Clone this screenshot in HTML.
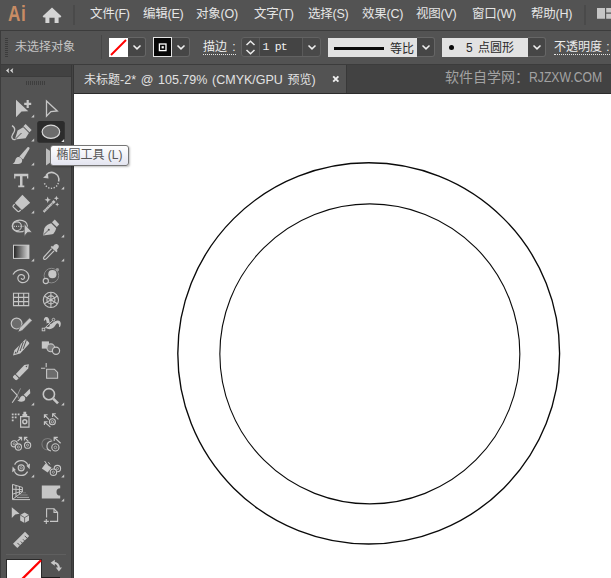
<!DOCTYPE html>
<html lang="zh-CN">
<head>
<meta charset="utf-8">
<title>Ai</title>
<style>
html,body{margin:0;padding:0;}
body{width:611px;height:578px;overflow:hidden;background:#535353;position:relative;font-family:"Liberation Sans","Noto Sans CJK SC",sans-serif;font-size:12px;color:#dcdcdc;}
.abs{position:absolute;}
#menubar{left:0;top:0;width:611px;height:30px;background:#535353;}
#menubar .mi{position:absolute;top:0;height:29px;line-height:28px;font-size:12.5px;letter-spacing:-0.25px;color:#e6e6e6;white-space:nowrap;}
#ctrl{left:0;top:30px;width:611px;height:34px;background:#535353;box-shadow:inset 0 1px 0 #3c3c3c;}
#dark{left:0;top:64px;width:611px;height:514px;background:#424242;}
#toolhead{left:1px;top:65px;width:70px;height:11px;background:#424242;}
.ln{position:absolute;}
#toolbody{left:1px;top:77px;width:70px;height:501px;background:#535353;}
#tab{left:74px;top:65px;width:272px;height:28px;background:#535353;}
#canvas{left:74px;top:94px;width:537px;height:484px;background:#fff;}

#ctrl .t{position:absolute;white-space:nowrap;font-size:12px;color:#d2d2d2;line-height:16px;}
.dd{position:absolute;top:7px;height:20px;width:18px;background:#464646;border:1px solid #666;border-left:none;border-radius:0 3px 3px 0;box-sizing:border-box;}
.dd svg{position:absolute;left:3.5px;top:6px;}
.lbox{position:absolute;top:8px;height:19px;background:#e2e2e2;color:#2a2a2a;}
.ul{border-bottom:1px dotted #e6e6e6;padding-bottom:0;}
</style>
</head>
<body>
<div id="menubar" class="abs">
  <div class="abs" id="ailogo" style="left:8px;top:0;height:30px;line-height:27.8px;font-size:22px;font-weight:bold;color:#c88c64;letter-spacing:0.8px;transform:scaleX(0.78);transform-origin:0 0;">Ai</div>
  <svg class="abs" style="left:42px;top:6px" width="22" height="18" viewBox="42 6 22 18"><path d="M52 7.4 L42.6 16.2 L43.6 17.4 H45.4 V23 H49.4 V17.8 H54.6 V23 H58.6 V17.4 H60.4 L61.4 16.2 Z" fill="#d4d4d4"/></svg>
  <div class="abs" style="left:73px;top:5px;width:2px;height:20px;background:#4a4a4a;"></div>
  <div class="mi" style="left:90px">文件(F)</div>
  <div class="mi" style="left:143px">编辑(E)</div>
  <div class="mi" style="left:196px">对象(O)</div>
  <div class="mi" style="left:254px">文字(T)</div>
  <div class="mi" style="left:308px">选择(S)</div>
  <div class="mi" style="left:362px">效果(C)</div>
  <div class="mi" style="left:416px">视图(V)</div>
  <div class="mi" style="left:472px">窗口(W)</div>
  <div class="mi" style="left:531px">帮助(H)</div>
  <div class="abs" style="left:584px;top:5px;width:2px;height:20px;background:#4a4a4a;"></div>
  <svg class="abs" style="left:596px;top:7px" width="15" height="13" viewBox="596 7 15 13"><path d="M597 8 H605 V18.8 H597 Z M606.2 8 H612 V12.6 H606.2 Z M606.2 13.8 H612 V18.8 H606.2 Z" fill="#c6c6c6"/></svg>
</div>
<div id="ctrl" class="abs">
  <svg class="abs" style="left:4px;top:7px" width="5" height="22" viewBox="0 0 5 22"><g fill="#3c3c3c"><rect x="1" y="1" width="3" height="1"/><rect x="1" y="3" width="3" height="1"/><rect x="1" y="5" width="3" height="1"/><rect x="1" y="7" width="3" height="1"/><rect x="1" y="9" width="3" height="1"/><rect x="1" y="11" width="3" height="1"/><rect x="1" y="13" width="3" height="1"/><rect x="1" y="15" width="3" height="1"/><rect x="1" y="17" width="3" height="1"/><rect x="1" y="19" width="3" height="1"/></g></svg>
  <div class="t" style="left:15px;top:9px;color:#c4c4c4;">未选择对象</div>
  <div class="abs" style="left:101px;top:5px;width:1px;height:24px;background:#474747;"></div>
  <svg class="abs" style="left:109px;top:8px" width="19" height="19" viewBox="0 0 19 19"><rect width="19" height="19" fill="#fff"/><path d="M2 17 L17 2" stroke="#f00" stroke-width="2"/></svg>
  <div class="dd" style="left:128px"><svg width="10" height="7" viewBox="0 0 10 7"><path d="M1.5 1.5 L5 4.9 L8.5 1.5" fill="none" stroke="#f0f0f0" stroke-width="1.5"/></svg></div>
  <svg class="abs" style="left:153px;top:7px" width="19" height="20" viewBox="0 0 19 20"><rect width="19" height="20" fill="#e4e4e4"/><rect x="1" y="1" width="17" height="18" fill="#060606"/><rect x="6.4" y="7" width="6.6" height="6.6" fill="none" stroke="#fff" stroke-width="1.3"/><rect x="8.6" y="9.2" width="2.2" height="2.2" fill="#fff"/></svg>
  <div class="dd" style="left:172px"><svg width="10" height="7" viewBox="0 0 10 7"><path d="M1.5 1.5 L5 4.9 L8.5 1.5" fill="none" stroke="#f0f0f0" stroke-width="1.5"/></svg></div>
  <div class="t" style="left:203px;top:9px;"><span class="ul" style="color:#ececec">描边<span style="letter-spacing:2px">&nbsp;</span>:</span></div>
  <div class="abs" style="left:241px;top:7px;width:80px;height:20px;border:1px solid #626262;border-radius:3px;box-sizing:border-box;background:#494949;"></div>
  <svg class="abs" style="left:245px;top:10px" width="11" height="15" viewBox="0 0 11 15"><path d="M1.5 5 L5.5 1.2 L9.5 5 M1.5 10 L5.5 13.8 L9.5 10" fill="none" stroke="#ececec" stroke-width="1.5"/></svg>
  <div class="abs" style="left:259px;top:8px;width:44px;height:18px;background:#444;border-left:1px solid #5a5a5a;border-right:1px solid #5a5a5a;box-sizing:border-box;"></div>
  <div class="t" style="left:262.5px;top:9px;font-family:'Liberation Mono','Noto Sans CJK SC',monospace;font-size:11.5px;letter-spacing:-0.8px;color:#f0f0f0;">1 pt</div>
  <div class="abs" style="left:307px;top:14px;line-height:0;"><svg width="10" height="7" viewBox="0 0 10 7"><path d="M1.5 1.5 L5 4.9 L8.5 1.5" fill="none" stroke="#f0f0f0" stroke-width="1.5"/></svg></div>
  <div class="lbox" style="left:328px;width:89px;"><div class="abs" style="left:6px;top:8.5px;width:50px;height:3px;background:#0a0a0a;"></div><div class="abs" style="left:62px;top:3px;font-size:12px;line-height:16px;white-space:nowrap;">等比</div></div>
  <div class="dd" style="left:417px"><svg width="10" height="7" viewBox="0 0 10 7"><path d="M1.5 1.5 L5 4.9 L8.5 1.5" fill="none" stroke="#f0f0f0" stroke-width="1.5"/></svg></div>
  <div class="lbox" style="left:442px;width:86px;"><div class="abs" style="left:7px;top:7px;width:5px;height:5px;border-radius:50%;background:#0a0a0a;"></div><div class="abs" style="left:24px;top:2px;font-size:12px;line-height:16px;white-space:pre;word-spacing:2px;">5 点圆形</div></div>
  <div class="dd" style="left:528px"><svg width="10" height="7" viewBox="0 0 10 7"><path d="M1.5 1.5 L5 4.9 L8.5 1.5" fill="none" stroke="#f0f0f0" stroke-width="1.5"/></svg></div>
  <div class="t" style="left:554px;top:9px;"><span class="ul" style="color:#ececec">不透明度<span style="letter-spacing:1px">&nbsp;</span>:</span></div>
</div>
<div id="dark" class="abs"></div>
<div id="toolhead" class="abs"></div>
<div id="toolbody" class="abs"></div>
<div id="tab" class="abs"><div class="abs" style="left:10px;top:7px;font-size:12.5px;line-height:16px;color:#e2e2e2;white-space:nowrap;word-spacing:1.2px;" id="tabtxt"><span style="font-size:12px">未标题</span>-2* @ 105.79% (CMYK/GPU <span style="font-size:12px">预览</span>)</div>
<svg class="abs" style="left:257px;top:9px" width="10" height="10" viewBox="0 0 10 10"><path d="M2.2 2.4 L7.4 7.6 M7.4 2.4 L2.2 7.6" stroke="#f0f0f0" stroke-width="1.9"/></svg></div>
<div class="abs" id="wm" style="left:445px;top:67px;font-size:14px;line-height:20px;color:#a2a2a2;white-space:nowrap;">软件自学网：<span style="display:inline-block;transform:scaleX(0.87);transform-origin:0 50%;">RJZXW.COM</span></div>
<div id="canvas" class="abs"></div>
<div class="ln" style="left:0;top:64px;width:611px;height:1px;background:#3c3c3c;"></div>
<div class="ln" style="left:0;top:30px;width:1px;height:548px;background:#3c3c3c;"></div>
<div class="ln" style="left:1px;top:76px;width:70px;height:1px;background:#3c3c3c;"></div>
<div class="ln" style="left:71px;top:65px;width:1px;height:513px;background:#383838;"></div>
<div class="ln" style="left:72px;top:65px;width:1px;height:513px;background:#444;"></div>
<div class="ln" style="left:73px;top:65px;width:1px;height:513px;background:#363636;"></div>
<div class="ln" style="left:346px;top:65px;width:1px;height:28px;background:#383838;"></div>
<div class="ln" style="left:74px;top:93px;width:537px;height:1px;background:#2c2c2c;"></div>

<svg class="abs" style="left:74px;top:93px" width="537" height="485" viewBox="74 93 537 485">
  <ellipse cx="368.7" cy="353.4" rx="190.9" ry="190.6" fill="none" stroke="#0a0a0a" stroke-width="1.35"/>
  <circle cx="369.85" cy="353.9" r="150" fill="none" stroke="#0a0a0a" stroke-width="1.1"/>
</svg>
<svg class="abs" id="tools" style="left:0;top:64px" width="74" height="514" viewBox="0 64 74 514">
<defs>
<linearGradient id="gr" x1="0" x2="1" y1="0" y2="0"><stop offset="0" stop-color="#222"/><stop offset="1" stop-color="#d8d8d8"/></linearGradient>
</defs>
<g fill="#c6c6c6" stroke="none">
<!-- header chevrons + gripper -->
<path d="M9.3 68 L6 70.6 L9.3 73.2 L8.5 70.6 Z M13.3 68 L10 70.6 L13.3 73.2 L12.5 70.6 Z" fill="#dadada"/>
<g fill="#3e3e3e"><rect x="26" y="81" width="1" height="4"/><rect x="28" y="81" width="1" height="4"/><rect x="30" y="81" width="1" height="4"/><rect x="32" y="81" width="1" height="4"/><rect x="34" y="81" width="1" height="4"/><rect x="36" y="81" width="1" height="4"/><rect x="38" y="81" width="1" height="4"/><rect x="40" y="81" width="1" height="4"/><rect x="42" y="81" width="1" height="4"/><rect x="44" y="81" width="1" height="4"/></g>
<!-- corner triangles -->
<g id="tri">
<path d="M34.2 114.4 V117.4 H31.2 Z"/><path d="M34.2 138.4 V141.4 H31.2 Z"/><path d="M34.2 162.4 V165.4 H31.2 Z"/><path d="M34.2 186.4 V189.4 H31.2 Z"/><path d="M34.2 210.4 V213.4 H31.2 Z"/><path d="M34.2 258.4 V261.4 H31.2 Z"/><path d="M34.2 402.4 V405.4 H31.2 Z"/><path d="M34.2 474.4 V477.4 H31.2 Z"/>
<path d="M64.2 186.4 V189.4 H61.2 Z"/><path d="M64.2 234.4 V237.4 H61.2 Z"/><path d="M64.2 258.4 V261.4 H61.2 Z"/><path d="M64.2 402.4 V405.4 H61.2 Z"/><path d="M64.2 474.4 V477.4 H61.2 Z"/><path d="M64.2 498.4 V501.4 H61.2 Z"/>
</g>
<!-- R1 L: group selection -->
<path d="M16 99.7 L28.3 111.2 L21.5 111.6 L16 117.3 Z"/>
<path d="M24.2 102.8 H31.2 V105 H24.2 Z M26.6 100 H28.8 V107.9 H26.6 Z"/>
<!-- R1 R: direct selection -->
<path d="M46.5 100.9 L57.3 110.9 L50.9 111.6 L46.5 116.2 Z" fill="none" stroke="#c6c6c6" stroke-width="1.3"/>
<!-- R2 L: curvature -->
<path d="M12 125.6 C16.5 128 14.5 132 12.6 134.5 C10.8 137.5 12.5 140.2 15.5 139.4" fill="none" stroke="#c6c6c6" stroke-width="1.3"/>
<path d="M23.2 127.2 L28.9 132.9 L25.6 138.3 L14.9 139.6 L17.6 130.6 Z"/>
<path d="M25.6 124 L31.6 130 L29.5 132.2 L23.4 126.2 Z"/>
<path d="M15.5 139 L21.5 133" stroke="#535353" stroke-width="1" fill="none"/>
<!-- R2 R: ellipse selected -->
<rect x="37.2" y="121" width="27.6" height="21.8" rx="2.5" fill="#2c2c2c"/>
<ellipse cx="50.9" cy="131.8" rx="8.8" ry="6.6" fill="#6c6c6c" stroke="#dadada" stroke-width="1.2"/>
<path d="M64.2 139 V142 H61.2 Z" fill="#e0e0e0"/>
<!-- R3 L: paintbrush -->
<path d="M27.6 147.2 C28.8 146.6 30 147.8 29.4 149 L23 159.4 L19.4 156.4 Z"/>
<path d="M18.8 157 C21.4 157.6 23 160 21.8 162.2 C20 164.6 16 164.2 12.6 163.8 C15.2 162.6 15 160.4 15.8 158.8 C16.5 157.4 17.7 156.8 18.8 157 Z"/>
<!-- R3 R: hidden tool -->
<path d="M46 148.2 L51 151.5 V162 L46 165.4 Z" fill="#bcbcbc"/>
<!-- R4 L: T -->
<path d="M14.1 173.8 H28.3 V178.6 H27 V176.2 H22.5 V185.4 H24.3 V187.2 H18.2 V185.4 H20 V176.2 H15.4 V178.6 H14.1 Z"/>
<!-- R4 R: rotate -->
<path d="M46.2 175 A7.2 7.2 0 0 1 58.6 181.5" fill="none" stroke="#c6c6c6" stroke-width="1.5"/>
<path d="M43 177.8 L47.9 173.4 L48.5 178.6 Z"/>
<path d="M58.3 183 A7.2 7.2 0 0 1 44.2 182" fill="none" stroke="#c6c6c6" stroke-width="1.4" stroke-dasharray="1.3 1.5"/>
<!-- R5 L: eraser -->
<path d="M22.4 194.8 L30.2 202.7 L21.9 209.9 L14.8 203 Z"/>
<path d="M14.6 204.2 L13.3 205.6 C12.9 206.1 12.9 206.7 13.3 207.1 L17.6 211.3 C18.1 211.7 18.8 211.7 19.3 211.3 L20.8 210" fill="none" stroke="#c6c6c6" stroke-width="1.2"/>
<!-- R5 R: magic wand -->
<path d="M43.6 211.9 L52.3 203.2" stroke="#c6c6c6" stroke-width="2.3" fill="none" stroke-dasharray="1.6 0.25"/>
<path d="M52.6 202.9 L54.6 200.9" stroke="#c6c6c6" stroke-width="2.8" fill="none"/>
<path d="M47.7 196.6 L48.6 198.9 L50.9 199.8 L48.6 200.7 L47.7 203 L46.8 200.7 L44.5 199.8 L46.8 198.9 Z"/>
<path d="M56.4 195.8 L57.1 197.6 L58.9 198.3 L57.1 199 L56.4 200.8 L55.7 199 L53.9 198.3 L55.7 197.6 Z"/>
<path d="M57.2 202.4 L57.8 203.8 L59.2 204.4 L57.8 205 L57.2 206.4 L56.6 205 L55.2 204.4 L56.6 203.8 Z"/>
<!-- R6 L: shape builder -->
<circle cx="17" cy="226.3" r="4.4" fill="none" stroke="#c6c6c6" stroke-width="1.1"/>
<ellipse cx="19.8" cy="226" rx="7.6" ry="5.9" fill="none" stroke="#c6c6c6" stroke-width="1.2"/>
<path d="M13.8 226.4 H24" stroke="#c6c6c6" stroke-width="1.2" stroke-dasharray="1 1.2" fill="none"/>
<path d="M24.2 223.6 L32.2 232.2 L27.6 232.4 L24.2 236.4 Z" stroke="#535353" stroke-width="0.8"/>
<!-- R6 R: pen -->
<path d="M51.2 223.2 L56.2 228.2 C55.6 230.6 54.4 233 52.4 234.2 L43 235.4 L44.4 228.2 C45.6 225.6 48.4 223.8 51.2 223.2 Z"/>
<path d="M54.8 219.4 L59.2 224.2 L56.8 227 L52 222.2 Z"/>
<path d="M43.4 235 L48.4 230.2" stroke="#535353" stroke-width="0.9" fill="none"/>
<circle cx="48.8" cy="229.8" r="1" fill="#535353"/>
<!-- R7 L: gradient -->
<rect x="13.5" y="245.2" width="15.4" height="13.2" fill="url(#gr)" stroke="#cdcdcd" stroke-width="1"/>
<!-- R7 R: eyedropper -->
<path d="M51.6 248.6 L44 257 C43.2 258 43.4 259.2 44.4 259.4 C45.2 259.6 45.8 259.2 46.4 258.6 L54 250.8" fill="none" stroke="#c6c6c6" stroke-width="1.2"/>
<path d="M50.6 247 L52 245.8 L53 246.8 C53.6 245 55.4 243.6 57.2 244.2 C59 244.8 59.4 247 58 248.6 L56.8 250 L57.6 251 L56.4 252.2 Z"/>
<!-- R8 L: spiral -->
<path d="M13 274.6 C15 270.6 19.5 268.8 23.6 270 C27.6 271.2 29.6 275 28.6 278.4 C27.6 281.8 24 283.4 21 282.4 C18.2 281.4 17.2 278.6 18.2 276.6 C19.2 274.6 21.8 274 23.4 275.2 C24.8 276.2 24.8 278.2 23.6 279 C22.6 279.6 21.4 279.2 21.2 278.2" fill="none" stroke="#c6c6c6" stroke-width="1.2"/>
<!-- R8 R: blend -->
<circle cx="51.4" cy="275.6" r="7.3" fill="none" stroke="#8a8a8a" stroke-width="1"/>
<circle cx="52.4" cy="274.2" r="4.1"/>
<circle cx="57.4" cy="269.8" r="1.7" fill="#9a9a9a"/>
<circle cx="45.8" cy="281" r="2.6" fill="#535353" stroke="#c6c6c6" stroke-width="1.1"/>
<!-- R9 L: grid -->
<path d="M13.5 293.3 H28.7 V305.6 H13.5 Z M18.5 293.3 V305.6 M23.7 293.3 V305.6 M13.5 297.4 H28.7 M13.5 301.6 H28.7" fill="none" stroke="#c6c6c6" stroke-width="1.1"/>
<!-- R9 R: polar grid -->
<g fill="none" stroke="#c6c6c6" stroke-width="1.1"><circle cx="50.9" cy="299.9" r="7.6"/><circle cx="50.9" cy="299.9" r="4"/><path d="M50.9 292.3 V307.5 M44.3 296.1 L57.5 303.7 M57.5 296.1 L44.3 303.7"/></g>
<!-- R10 L: shaper -->
<circle cx="16.6" cy="323.6" r="5.4" fill="#6c6c6c" stroke="#c6c6c6" stroke-width="1.2"/>
<path d="M29.6 317.8 L32.2 320.4 L22 330.8 L17.8 332.2 L19.4 328 Z" stroke="#535353" stroke-width="0.8"/>
<!-- R10 R: puppet warp -->
<path d="M43.9 320.8 C43.6 318.6 44.6 317 46.2 316.9 C48.2 316.8 49.2 318.8 49.4 321 C49.6 322.6 50 323.6 50.6 324.2 C52.2 322.8 55 320.6 57.4 320.4 C59.6 320.2 61 321.8 60.8 324 C60.7 325.2 60.4 326.2 59.9 326.9 C59.5 327 59.1 326.8 59 326.4 C59.2 325 58.8 323.4 57.6 323.2 C56.6 323 56 324.4 55.2 325.6 C54.2 327.2 52.6 328.8 50.4 329.1 C48.6 329.3 47 328.8 46 328 C46.6 326.2 46.8 323.8 46.6 322 C46.4 320.4 45.8 319.4 45.2 319.6 C44.8 319.8 44.8 320.4 44.8 320.8 Z"/>
<circle cx="47.9" cy="325" r="1.9" fill="#505050"/><path d="M43.6 329.2 L53.4 319.8" stroke="#c6c6c6" stroke-width="0.9" fill="none"/>
<rect x="42.2" y="328.2" width="2.6" height="2.6" fill="#535353" stroke="#c6c6c6" stroke-width="0.9"/>

<circle cx="53.5" cy="319.6" r="1.3" fill="#535353" stroke="#c6c6c6" stroke-width="0.9"/>
<!-- R11 L: smooth/crayon -->
<path d="M13 355.6 L14.4 350.2 L25 339.8 C25.4 339.4 26 339.4 26.4 339.8 L29 342.6 C29.4 343 29.4 343.6 29 344 L20.2 353.4 Z"/>
<path d="M17.1 352.8 L20.2 344.2 M20.1 351 L23.3 342 M23.2 348.8 L26.4 339.8" stroke="#535353" stroke-width="1" fill="none"/>
<path d="M14.6 353.8 L15.4 351.6 L17 353.2 Z" fill="#535353"/>
<!-- R11 R: shapes -->
<rect x="41.8" y="341.4" width="7.2" height="7.2"/>
<circle cx="50.8" cy="347.8" r="3.9" fill="#7a7a7a" stroke="#c6c6c6" stroke-width="1.1"/>
<circle cx="56" cy="350.8" r="3.6" fill="#535353" stroke="#c6c6c6" stroke-width="1.2"/>
<!-- R12 L: pencil -->
<path d="M28.9 364.2 L28.2 368.6 L19.4 377.5 L15.8 373.9 L24.3 365.1 Z"/>
<path d="M13.4 376 L15 374.6 L18.7 378.3 L17.2 379.8 C16.6 380.4 15.8 380.4 15.2 379.8 L13.4 378 C12.8 377.4 12.8 376.6 13.4 376 Z"/>
<path d="M27.4 365.6 L25.4 366.2 L26.8 367.6 Z" fill="#535353"/>
<!-- R12 R: artboard -->
<path d="M41 368.2 H45.2 M46.2 363 V367.2" stroke="#c6c6c6" stroke-width="1.1" fill="none"/>
<path d="M46.6 369.2 H54.4 L57.6 372.4 V378.2 H46.6 Z" fill="#6c6c6c" stroke="#c6c6c6" stroke-width="1.1"/>
<!-- R13 L: x + brush -->
<path d="M11.2 388.9 L17.3 395.3 L12.2 402.7" stroke="#c6c6c6" stroke-width="1.1" fill="none"/><path d="M17.3 395.3 L20.5 388.4 M17.3 395.3 L18.8 398.6" stroke="#9a9a9a" stroke-width="0.9" fill="none"/>
<path d="M29.8 388.7 L30.3 393.3 L26.4 397.3 L23.7 394.8 Z"/>
<path d="M23.2 395.8 C25 396.6 25.8 398.4 25 400 C23.8 402.2 20 402.2 17.3 400.4 C19.4 400 19.4 398.6 20.2 397.4 C21 396.2 22.2 395.6 23.2 395.8 Z"/>
<!-- R13 R: zoom -->
<circle cx="48.9" cy="394.2" r="5.6" fill="none" stroke="#c6c6c6" stroke-width="1.6"/>
<path d="M53.2 398.6 L58 403.4" stroke="#c6c6c6" stroke-width="2.6" fill="none"/>
<!-- R14 L: symbol sprayer -->
<path d="M20.6 416.6 H29 V427.2 H20.6 Z" fill="none" stroke="#c6c6c6" stroke-width="1.2"/>
<path d="M22.4 414 H27.2 V416.4 H22.4 Z M23.4 411.8 H26.2 V414 H23.4 Z"/>
<circle cx="24.8" cy="421.8" r="2" fill="none" stroke="#c6c6c6" stroke-width="1.5"/>
<path d="M11.8 413.5 h1.8 v1.8 h-1.8 z M14.75 413.5 h1.8 v1.8 h-1.8 z M17.7 413.5 h1.8 v1.8 h-1.8 z M11.8 416.45 h1.8 v1.8 h-1.8 z M14.75 416.45 h1.8 v1.8 h-1.8 z M11.8 419.4 h1.8 v1.8 h-1.8 z"/>
<!-- R14 R: symbol shifter -->
<g fill="none" stroke="#c6c6c6" stroke-width="1.1"><path d="M49 419.6 L44.6 415 M44.4 418 V414.8 H47.6"/><path d="M58.4 419.4 L52.8 414 M52.6 417 V413.8 H55.8"/><path d="M50.4 427.2 L44.6 422 M44.4 425 V421.8 H47.6"/><circle cx="52.4" cy="421.8" r="3"/><circle cx="52.4" cy="421.8" r="1.2" stroke-width="0.8"/></g>
<!-- R15 L: scruncher -->
<g fill="none" stroke="#c6c6c6" stroke-width="1.1"><circle cx="14.2" cy="443.8" r="3.1"/><circle cx="18.4" cy="447" r="3.1" fill="#535353"/><circle cx="27.6" cy="445.2" r="3.1"/><circle cx="14.2" cy="443.8" r="1.1" stroke-width="0.7"/><circle cx="18.4" cy="447" r="1.1" stroke-width="0.7"/><circle cx="27.6" cy="445.2" r="1.1" stroke-width="0.7"/><path d="M17.6 441 L21.4 437.6 M18.6 437.4 H21.6 V440.4"/><path d="M28.4 441.4 L24.6 437.6 M27.4 437.4 H24.4 V440.4"/></g>
<!-- R15 R: sizer -->
<g fill="none" stroke-width="1.1"><path d="M49 449.6 A5.6 5.6 0 1 1 52.4 441.4" stroke="#7c7c7c"/><path d="M51 451 A5 5 0 0 1 51.6 441.1" stroke="#c6c6c6"/><circle cx="55.4" cy="447.4" r="3.6" stroke="#c6c6c6" fill="#535353"/><circle cx="55.4" cy="447.4" r="1.3" stroke="#c6c6c6" stroke-width="0.7"/><path d="M60.6 443.2 L54.6 437.6 M54.2 441 V437.4 H57.8" stroke="#c6c6c6" stroke-width="1.2"/></g>
<!-- R16 L: spinner -->
<g fill="none" stroke="#c6c6c6" stroke-width="1.2"><path d="M14.6 464.6 A7.4 7.4 0 0 1 27.8 464.8"/><path d="M27.6 471.6 A7.4 7.4 0 0 1 14.4 471.2"/><circle cx="21.2" cy="467.8" r="3"/><circle cx="21.2" cy="467.8" r="1.2" stroke-width="0.7"/></g>
<path d="M26.4 465.8 L30 463.6 L29.6 469.2 Z M15.8 470 L12.2 472.2 L12.6 466.6 Z"/>
<!-- R16 R: stainer -->
<path d="M45.6 463.6 L51.6 467.8 L47.6 472.6 L41.8 468.4 Z"/>
<path d="M44.6 461 L47.4 465 M48.4 462.2 L50 464.4" stroke="#c6c6c6" stroke-width="1" fill="none"/>
<g fill="none" stroke="#c6c6c6" stroke-width="1.1"><circle cx="57.4" cy="468.6" r="3.2"/><circle cx="53.4" cy="472.2" r="3.2" fill="#535353"/><circle cx="57.4" cy="468.6" r="1.1" stroke-width="0.7"/><circle cx="53.4" cy="472.2" r="1.1" stroke-width="0.7"/></g>
<!-- R17 L: perspective grid -->
<g fill="none" stroke="#c6c6c6" stroke-width="1"><path d="M12.5 484.4 V499.4 L22.4 492 V487.4 Z"/><path d="M12.5 489.2 L22.4 489.6 M12.5 494.2 L22.4 491 M16 485.4 V496.8 M19.4 486.4 V494.2"/><path d="M12.5 499.6 H30"/><path d="M17 497.4 H29" stroke="#a8a8a8"/><path d="M20 495 H27.6" stroke="#8a8a8a"/><path d="M22.4 492.8 H26" stroke="#7a7a7a"/></g>
<!-- R17 R: eraser tool shape -->
<path d="M41.8 485.4 H60.2 V488.2 A3.7 3.7 0 0 0 60.2 495.6 V498.6 H41.8 Z"/>
<!-- R18 L: arrow + cube -->
<path d="M11.8 507.2 L19.6 513.8 L15.2 514.4 L11.8 518 Z"/>
<path d="M24.6 512.6 L29 515 V520.4 L24.6 523 L20.2 520.4 V515 Z"/>
<path d="M20.2 515 L24.6 517.6 L29 515 M24.6 517.6 V523" fill="none" stroke="#535353" stroke-width="0.8"/>
<!-- R18 R: page plus -->
<path d="M46.6 517.6 V508.8 H54 L57.6 512.4 V521.4 H50" fill="none" stroke="#c6c6c6" stroke-width="1.1"/>
<path d="M54 508.8 V512.4 H57.6" fill="none" stroke="#c6c6c6" stroke-width="1.1"/>
<path d="M43.8 521.4 H48.8 M46.3 518.9 V523.9" stroke="#c6c6c6" stroke-width="1.1" fill="none"/>
<!-- R19 L: ruler -->
<path d="M25 531.8 L29.2 536 L17.3 548 L13 543.8 Z"/>
<path d="M27.4 538.5 L24.7 535.8 M24.6 540.9 L23 539.3 M22.4 543.1 L20.8 541.5 M20.1 545.6 L17.4 542.9" stroke="#535353" stroke-width="1" fill="none"/>
<!-- separator -->
<rect x="6" y="554" width="60" height="1" fill="#5f5f5f"/>
<!-- fill swatch -->
<rect x="6" y="559" width="36" height="20" fill="#2a2a2a"/>
<rect x="7" y="560" width="34" height="19" fill="#fff"/>
<path d="M41 560.2 L21.6 579.6" stroke="#f00" stroke-width="2.3" fill="none"/>
<rect x="42" y="577" width="18" height="1" fill="#1c1c1c"/>
<!-- swap arrows -->
<path d="M53.6 562.8 C57.8 562.8 58.8 565.4 58.9 568.6" fill="none" stroke="#c6c6c6" stroke-width="2"/>
<path d="M50.6 562.8 L54.8 559.8 V565.8 Z M58.9 571.4 L55.8 567.6 H62 Z"/>
</g>
</svg>
<div class="abs" id="tip" style="left:50px;top:145px;width:79px;height:21px;box-sizing:border-box;border:1px solid #767676;border-radius:3px;background:linear-gradient(#ffffff,#e4e5f0);box-shadow:1px 1px 2px rgba(0,0,0,0.25);"><div class="abs" style="left:5.4px;top:1px;font-size:12px;line-height:17px;color:#575757;white-space:nowrap;">椭圆工具 (L)</div></div>
</body>
</html>
